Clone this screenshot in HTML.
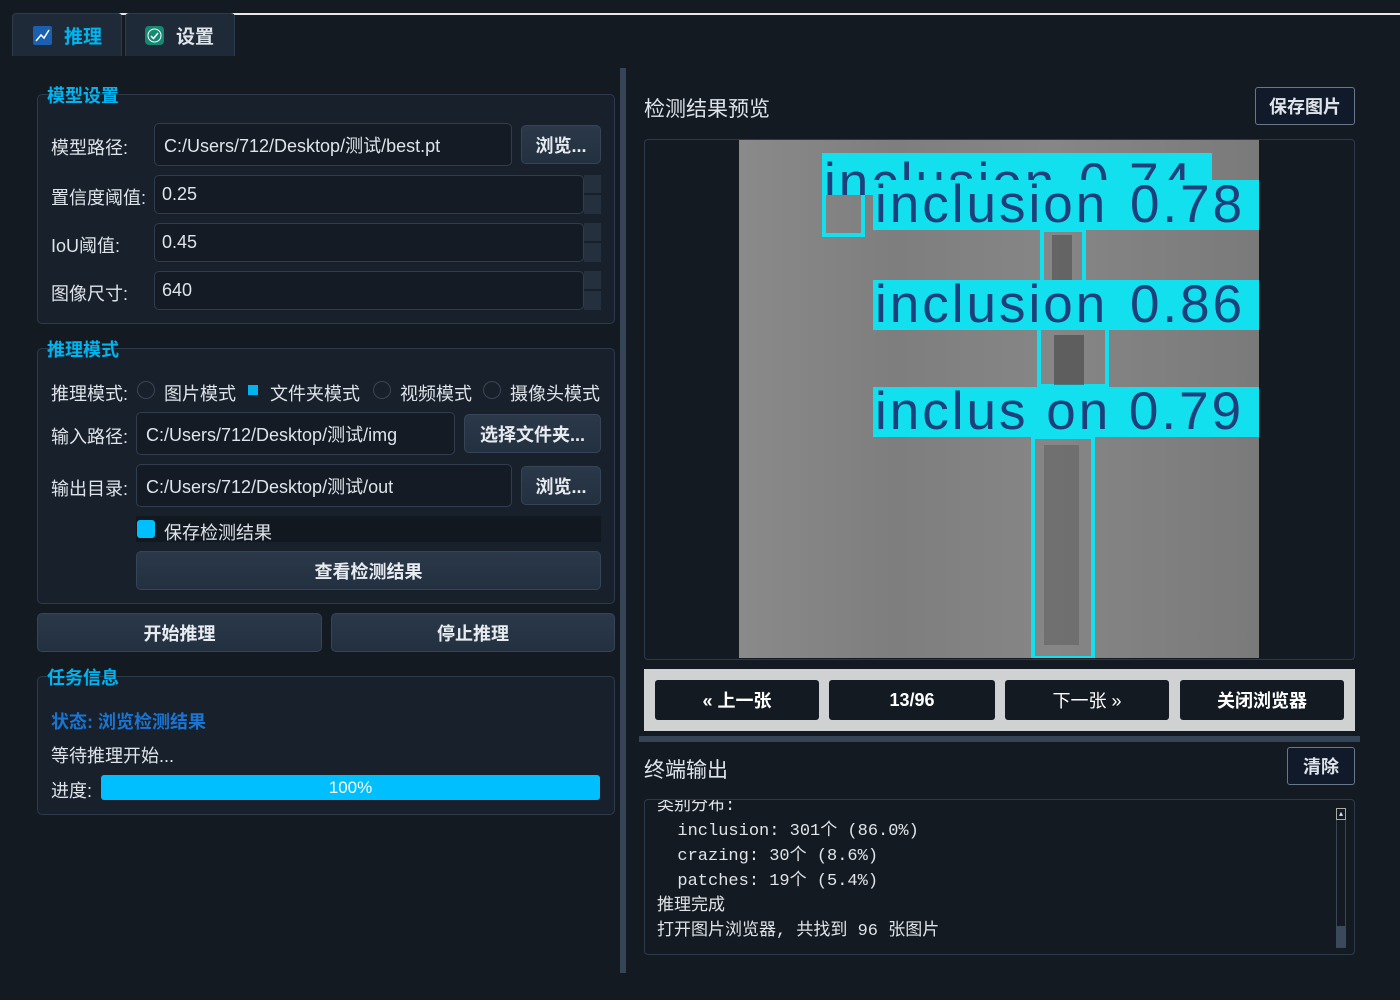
<!DOCTYPE html>
<html><head><meta charset="utf-8"><style>
*{box-sizing:border-box;margin:0;padding:0}
body{width:1400px;height:1000px;background:#131a22;font-family:"Liberation Sans","Noto Sans CJK SC",sans-serif;color:#dfe4ea;position:relative;overflow:hidden;font-size:18px}
.a{position:absolute}
.tab{position:absolute;top:13px;height:43px;background:#1f2a38;border:1px solid #2d3a4a;border-bottom:none;border-radius:4px 4px 0 0;font-size:19px;display:flex;align-items:center;font-weight:bold}
.grp{position:absolute;border:1px solid #2d3a4a;border-radius:5px;background:#18202b}
.gt{position:absolute;color:#00b4f0;font-weight:bold;font-size:18px;background:transparent}
.lbl{position:absolute;font-size:18px;color:#dfe4ea}
.inp{position:absolute;background:#141b25;border:1px solid #2f3d4f;border-radius:5px;font-size:18px;padding-left:9px;display:flex;align-items:center}
.spin{position:absolute;width:17px;background:#25303e}
.btn{position:absolute;background:linear-gradient(#2b3849,#223040);border:1px solid #354457;border-radius:5px;font-weight:bold;font-size:18px;display:flex;align-items:center;justify-content:center;color:#e8ecf0}
.rad{position:absolute;width:18px;height:18px;border:1px solid #3a4656;border-radius:50%;top:381px}
.nb{position:absolute;top:680px;height:40px;background:#131a22;border-radius:3px;color:#fff;font-weight:bold;font-size:18px;display:flex;align-items:center;justify-content:center}
.lab{position:absolute;background:#12e0ee;color:#1d3f7a;font-size:53px;line-height:50px;white-space:nowrap;overflow:hidden;letter-spacing:3px;word-spacing:4px}
.box{position:absolute;border:4px solid #12e0ee}
.mono{font-family:"Liberation Mono","Noto Sans CJK SC",monospace;font-size:17px;line-height:25px;color:#e0e4e8}
</style></head><body>
<div class="a" style="left:105px;top:13px;width:1295px;height:2px;background:#e8e8e8"></div>
<div class="tab" style="left:12px;width:110px;color:#00b4f0"><span style="display:inline-block;width:19px;height:19px;background:#1a5fb0;margin:0 12px 0 20px;border-radius:2px;position:relative"><svg width="19" height="19" style="position:absolute;left:0;top:0"><path d="M3 15 L8 9 L11 12 L16 4" stroke="#fff" stroke-width="1.5" fill="none"/></svg></span>推理</div>
<div class="tab" style="left:125px;width:110px;color:#dfe4ea"><span style="display:inline-block;width:19px;height:19px;background:#148a72;margin:0 12px 0 19px;border-radius:4px;position:relative"><svg width="19" height="19" style="position:absolute;left:0;top:0"><circle cx="9.5" cy="9.5" r="6.5" stroke="#fff" stroke-width="1" fill="none"/><path d="M6 10 L8.5 12.5 L13 7" stroke="#fff" stroke-width="1.5" fill="none"/></svg></span>设置</div>

<div class="grp" style="left:37px;top:94px;width:578px;height:230px"></div>
<div class="gt" style="left:47px;top:82px">模型设置</div>
<div class="lbl" style="left:51px;top:134px">模型路径:</div>
<div class="inp" style="left:154px;top:123px;width:358px;height:43px">C:/Users/712/Desktop/测试/best.pt</div>
<div class="btn" style="left:521px;top:125px;width:80px;height:39px">浏览...</div>
<div class="lbl" style="left:51px;top:184px">置信度阈值:</div>
<div class="inp" style="left:154px;top:175px;width:430px;height:39px;padding-left:7px">0.25</div>
<div class="spin" style="left:584px;top:175px;height:18px"></div><div class="spin" style="left:584px;top:195px;height:19px"></div>
<div class="lbl" style="left:51px;top:232px">IoU阈值:</div>
<div class="inp" style="left:154px;top:223px;width:430px;height:39px;padding-left:7px">0.45</div>
<div class="spin" style="left:584px;top:223px;height:18px"></div><div class="spin" style="left:584px;top:243px;height:19px"></div>
<div class="lbl" style="left:51px;top:280px">图像尺寸:</div>
<div class="inp" style="left:154px;top:271px;width:430px;height:39px;padding-left:7px">640</div>
<div class="spin" style="left:584px;top:271px;height:18px"></div><div class="spin" style="left:584px;top:291px;height:19px"></div>

<div class="grp" style="left:37px;top:348px;width:578px;height:256px"></div>
<div class="gt" style="left:47px;top:336px">推理模式</div>
<div class="lbl" style="left:51px;top:380px">推理模式:</div>
<div class="rad" style="left:137px"></div><div class="lbl" style="left:164px;top:380px">图片模式</div>
<div class="a" style="left:248px;top:385px;width:10px;height:10px;background:#00b4f0"></div><div class="lbl" style="left:270px;top:380px">文件夹模式</div>
<div class="rad" style="left:373px"></div><div class="lbl" style="left:400px;top:380px">视频模式</div>
<div class="rad" style="left:483px"></div><div class="lbl" style="left:510px;top:380px">摄像头模式</div>
<div class="lbl" style="left:51px;top:423px">输入路径:</div>
<div class="inp" style="left:136px;top:412px;width:319px;height:43px">C:/Users/712/Desktop/测试/img</div>
<div class="btn" style="left:464px;top:414px;width:137px;height:39px">选择文件夹...</div>
<div class="lbl" style="left:51px;top:475px">输出目录:</div>
<div class="inp" style="left:136px;top:464px;width:376px;height:43px">C:/Users/712/Desktop/测试/out</div>
<div class="btn" style="left:521px;top:466px;width:80px;height:39px">浏览...</div>
<div class="a" style="left:136px;top:516px;width:465px;height:26px;background:#121820"></div>
<div class="a" style="left:137px;top:520px;width:18px;height:18px;background:#00bfff;border-radius:3px"></div>
<div class="lbl" style="left:164px;top:519px">保存检测结果</div>
<div class="btn" style="left:136px;top:551px;width:465px;height:39px">查看检测结果</div>

<div class="btn" style="left:37px;top:613px;width:285px;height:39px">开始推理</div>
<div class="btn" style="left:331px;top:613px;width:284px;height:39px">停止推理</div>

<div class="grp" style="left:37px;top:676px;width:578px;height:139px"></div>
<div class="gt" style="left:47px;top:664px">任务信息</div>
<div class="a" style="left:51px;top:708px;color:#1a74d2;font-weight:bold;font-size:18px">状态: 浏览检测结果</div>
<div class="lbl" style="left:51px;top:742px">等待推理开始...</div>
<div class="lbl" style="left:51px;top:777px">进度:</div>
<div class="a" style="left:101px;top:775px;width:499px;height:25px;background:#00bfff;border-radius:3px;text-align:center;font-size:17px;line-height:26px;color:#fff">100%</div>

<div class="a" style="left:620px;top:68px;width:6px;height:905px;background:#354457"></div>

<div class="a" style="left:644px;top:93px;font-size:21px">检测结果预览</div>
<div class="a" style="left:1255px;top:87px;width:100px;height:38px;border:1px solid #6a7788;border-radius:3px;background:#111a2a;font-weight:bold;display:flex;align-items:center;justify-content:center;font-size:18px">保存图片</div>
<div class="a" style="left:644px;top:139px;width:711px;height:521px;border:1px solid #2d3a4a;border-radius:4px;background:#131a22"></div>
<div class="a" style="left:739px;top:140px;width:520px;height:518px;background:linear-gradient(90deg,#8a8a8a,#7e7e7e 30%,#868686 60%,#7a7a7a);overflow:hidden">
 <div class="box" style="left:83px;top:13px;width:43px;height:84px"></div>
 <div class="lab" style="left:83px;top:13px;width:390px;height:42px;line-height:60px;padding-left:2px">inclusion 0.74</div>
 <div class="box" style="left:301px;top:88px;width:46px;height:56px"></div>
 <div class="a" style="left:313px;top:95px;width:20px;height:45px;background:#444;opacity:.5"></div>
 <div class="lab" style="left:134px;top:40px;width:386px;height:50px;padding-left:2px">inclusion 0.78</div>
 <div class="box" style="left:298px;top:186px;width:72px;height:62px"></div>
 <div class="a" style="left:315px;top:195px;width:30px;height:50px;background:#444;opacity:.6"></div>
 <div class="lab" style="left:134px;top:140px;width:386px;height:50px;padding-left:2px">inclusion 0.86</div>
 <div class="box" style="left:292px;top:295px;width:64px;height:225px"></div>
 <div class="a" style="left:305px;top:305px;width:35px;height:200px;background:#5a5a5a;opacity:.5"></div>
 <div class="lab" style="left:134px;top:247px;width:386px;height:50px;padding-left:2px;word-spacing:0">inclus on 0.79</div>
</div>
<div class="a" style="left:644px;top:669px;width:711px;height:62px;background:#d0d1d3"></div>
<div class="nb" style="left:655px;width:164px">« 上一张</div>
<div class="nb" style="left:829px;width:166px">13/96</div>
<div class="nb" style="left:1005px;width:164px;font-weight:normal">下一张 »</div>
<div class="nb" style="left:1180px;width:164px">关闭浏览器</div>
<div class="a" style="left:639px;top:736px;width:721px;height:6px;background:#354457"></div>
<div class="a" style="left:644px;top:754px;font-size:21px">终端输出</div>
<div class="a" style="left:1287px;top:747px;width:68px;height:38px;border:1px solid #6a7788;border-radius:3px;background:#111a2a;font-weight:bold;display:flex;align-items:center;justify-content:center;font-size:18px">清除</div>
<div class="a" style="left:644px;top:799px;width:711px;height:156px;border:1px solid #2d3a4a;border-radius:4px;background:#131a22;overflow:hidden">
 <div class="mono" style="position:absolute;left:12px;top:-6px;white-space:pre">类别分布:
  inclusion: 301个 (86.0%)
  crazing: 30个 (8.6%)
  patches: 19个 (5.4%)
推理完成
打开图片浏览器, 共找到 96 张图片</div>
 <div class="a" style="left:691px;top:8px;width:10px;height:140px;border:1px solid #3a4656"></div>
 <div class="a" style="left:691px;top:126px;width:10px;height:21px;background:#3a4a5c"></div>
 <div class="a" style="left:691px;top:8px;width:10px;height:12px;border:1px solid #aaa;font-size:8px;line-height:10px;text-align:center">▴</div>
</div>
</body></html>
